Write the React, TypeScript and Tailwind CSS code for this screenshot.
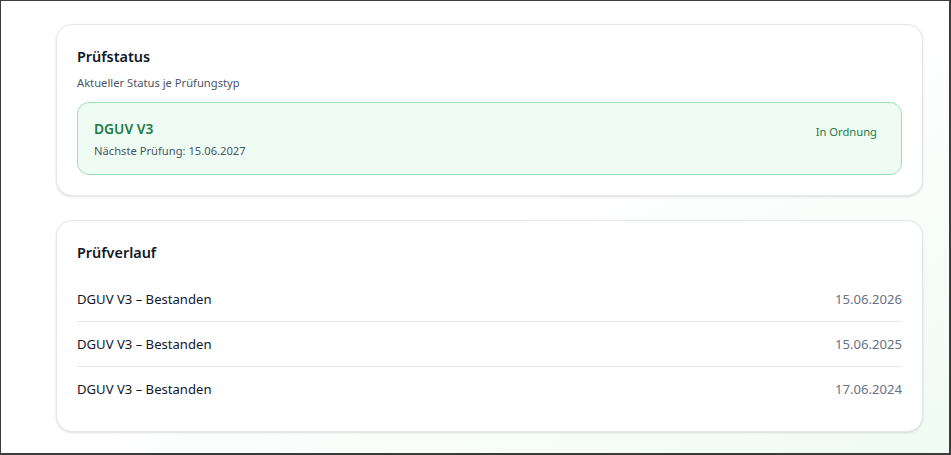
import React from "react";

const history = [
  { label: "DGUV V3 – Bestanden", date: "15.06.2026" },
  { label: "DGUV V3 – Bestanden", date: "15.06.2025" },
  { label: "DGUV V3 – Bestanden", date: "17.06.2024" },
];

export default function App() {
  return (
    <div
      className="h-[455px] w-[951px] overflow-hidden border-t border-l border-r-2 border-b-2 border-[#3c3c3c] bg-gradient-to-br from-white via-white to-[#effbf3]"
      style={{ fontFamily: '"Segoe UI", "Noto Sans", "Open Sans", sans-serif' }}
    >
      <div className="flex w-[867px] ml-[55px] flex-col gap-6 pt-[23px]">
        <div className="rounded-2xl border border-gray-200 bg-white p-5 shadow-sm">
          <h2 className="text-[14.4px] leading-6 font-semibold text-gray-900">Prüfstatus</h2>
          <p className="mt-1.5 text-[11.2px] leading-4 text-gray-600">Aktueller Status je Prüfungstyp</p>
          <div className="mt-[11px] flex items-start justify-between rounded-xl border border-[#9fe0b2] bg-[#effcf3] pt-4 pb-[15px] pl-4 pr-6">
            <div>
              <div className="text-[13.8px] leading-5 font-semibold text-[#217a45]">DGUV V3</div>
              <div className="mt-1 text-[11.2px] leading-4 text-gray-600">Nächste Prüfung: 15.06.2027</div>
            </div>
            <span className="mt-[5px] text-[11.2px] leading-4 text-[#217a45]">In Ordnung</span>
          </div>
        </div>

        <div className="rounded-2xl border border-gray-200 bg-white p-5 shadow-sm">
          <h2 className="text-[14.4px] leading-6 font-semibold text-gray-900">Prüfverlauf</h2>
          <ul className="mt-3 divide-y divide-gray-200">
            {history.map((h) => (
              <li key={h.date} className="flex items-center justify-between py-3 text-[13.1px] leading-5">
                <span className="text-gray-900">{h.label}</span>
                <span className="text-gray-500">{h.date}</span>
              </li>
            ))}
          </ul>
        </div>
      </div>
    </div>
  );
}
